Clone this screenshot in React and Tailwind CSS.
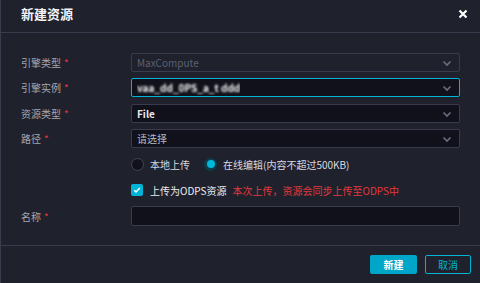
import React from 'react';

const Chevron = () => (
    <svg className="w-[12px] h-[12px] text-[#6b6e82]" viewBox="0 0 12 12" fill="none" stroke="currentColor" strokeWidth="1.6">
        <path d="M2.5 4.5L6 8l3.5-3.5" />
    </svg>
);

const Label = ({ text, required = true }) => (
    <div className="w-[110px] shrink-0 text-[10px] text-[#a3a6b4]">
        {text}
        {required && <span className="text-[#e0383e] ml-[3px]">*</span>}
    </div>
);

const Select = ({ children, variant = 'normal' }) => {
    const cls =
        variant === 'disabled'
            ? 'bg-[#1f212c] border-[#3a3c4e] text-[#5d6072]'
            : variant === 'focus'
            ? 'bg-[#10111a] border-[#00b4d8] text-[#e8e9ee]'
            : 'bg-[#10111a] border-[#3a3c4e] text-[#e8e9ee]';
    return (
        <div className={`flex-1 h-[19px] border rounded-[2px] flex items-center justify-between pl-[5px] pr-[6px] text-[10px] ${cls}`}>
            <div className="truncate">{children}</div>
            <Chevron />
        </div>
    );
};

export default function App() {
    return (
        <div
            className="w-[480px] h-[283px] bg-[#1f212c] border-l border-[#3a3c4e] flex flex-col overflow-hidden"
            style={{ fontFamily: '"Noto Sans CJK SC", "Noto Sans", sans-serif' }}
        >
            {/* Header */}
            <div className="h-[33px] shrink-0 border-b border-[#3a3c4e] flex items-center justify-between pl-[20px] pr-[12px] pb-[4px]">
                <span className="text-[13px] font-bold text-[#f2f3f6]">新建资源</span>
                <svg className="w-[10px] h-[10px] text-white" viewBox="0 0 10 10" stroke="currentColor" strokeWidth="2.2">
                    <path d="M1.5 1.5l7 7M8.5 1.5l-7 7" />
                </svg>
            </div>

            {/* Body */}
            <div className="flex-1 flex flex-col pl-[20px] pr-[20px] pt-[20px]">
                <div className="flex items-center">
                    <Label text="引擎类型" />
                    <Select variant="disabled">MaxCompute</Select>
                </div>
                <div className="flex items-center mt-[6px]">
                    <Label text="引擎实例" />
                    <Select variant="focus">
                        <span className="blur-[1.1px] font-bold text-[#f4f4f6]">vaa_dd_0PS_a_t ddd</span>
                    </Select>
                </div>
                <div className="flex items-center mt-[7px]">
                    <Label text="资源类型" />
                    <Select>
                        <span className="font-bold">File</span>
                    </Select>
                </div>
                <div className="flex items-center mt-[6px]">
                    <Label text="路径" />
                    <Select>
                        <span className="text-[#b5b7c3]">请选择</span>
                    </Select>
                </div>

                <div className="flex items-center mt-[6px] h-[20px] pl-[110px] text-[10px] text-[#d9dae1]">
                    <div className="flex items-center">
                        <span className="w-[13px] h-[13px] rounded-full bg-[#10111a] border border-[#444658]" />
                        <span className="ml-[6px]">本地上传</span>
                    </div>
                    <div className="flex items-center ml-[14px]">
                        <span className="w-[13px] h-[13px] rounded-full bg-[#0b3d4b] flex items-center justify-center">
                            <span className="w-[8px] h-[8px] rounded-full bg-[#00b8dc]" />
                        </span>
                        <span className="ml-[6px]">在线编辑(内容不超过500KB)</span>
                    </div>
                </div>

                <div className="flex items-center mt-[6px] h-[20px] pl-[110px] text-[10px]">
                    <span className="w-[12px] h-[12px] rounded-[2px] bg-[#00b4d8] flex items-center justify-center">
                        <svg className="w-[8px] h-[8px]" viewBox="0 0 8 8" fill="none" stroke="white" strokeWidth="1.5">
                            <path d="M1.2 4.2l1.8 1.7L6.8 2" />
                        </svg>
                    </span>
                    <span className="ml-[7px] text-[#eceef2]">上传为ODPS资源</span>
                    <span className="ml-[6px] text-[#e5383b]">本次上传，资源会同步上传至ODPS中</span>
                </div>

                <div className="flex items-center mt-[6px]">
                    <Label text="名称" />
                    <div className="flex-1 h-[20px] border border-[#3a3c4e] rounded-[2px] bg-[#10111a]" />
                </div>
            </div>

            {/* Footer */}
            <div className="h-[38px] shrink-0 border-t border-[#3a3c4e] flex items-center justify-end gap-[8px] pr-[9px]">
                <button className="w-[47px] h-[19px] rounded-[2px] bg-[#00a6c8] text-white text-[10px] font-bold flex items-center justify-center">
                    新建
                </button>
                <button className="w-[46px] h-[19px] rounded-[2px] border border-[#00b4d8] text-[#00b4d8] text-[10px] flex items-center justify-center">
                    取消
                </button>
            </div>
        </div>
    );
}
